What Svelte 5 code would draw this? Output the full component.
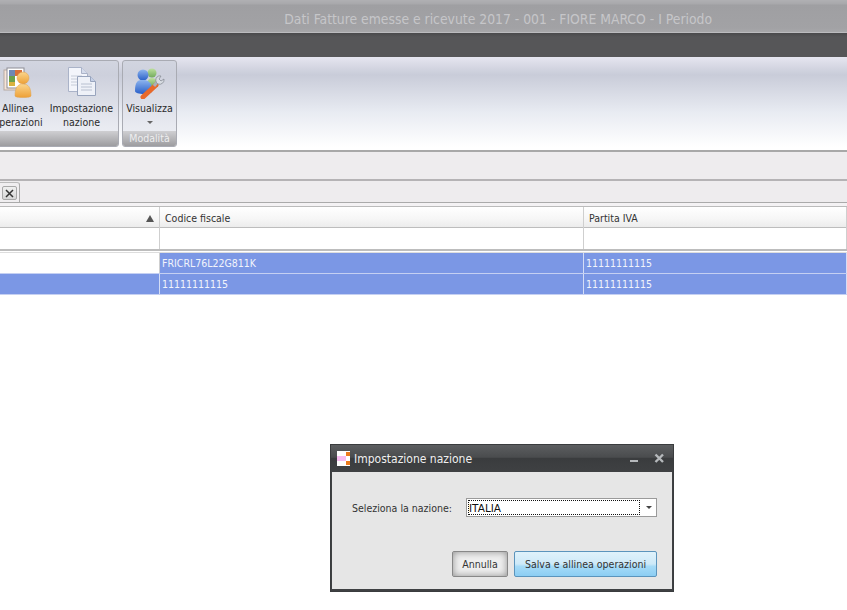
<script>
  const columns = ['', 'Codice fiscale', 'Partita IVA'];
  const rows = [
    { cells: ['', 'FRICRL76L22G811K', '11111111115'], firstSelected: false },
    { cells: ['', '11111111115', '11111111115'], firstSelected: true }
  ];
</script>

<div class="page">
  <header class="titlebar"><span>Dati Fatture emesse e ricevute 2017 - 001 - FIORE MARCO - I Periodo</span></header>
  <div class="tabsbar"></div>

  <section class="ribbon">
    <div class="group first">
      <div class="buttons">
        <div class="rbtn allinea">
          <svg width="30" height="32" viewBox="4 0 30 32">
            <defs>
              <linearGradient id="orange" x1="0" y1="0" x2="0" y2="1"><stop offset="0" stop-color="#fbd58c"/><stop offset="1" stop-color="#eda036"/></linearGradient>
            </defs>
            <rect x="5" y="3" width="17" height="20" fill="#f6e4d8" stroke="#b6a9a2"/>
            <rect x="8" y="1" width="17" height="20" fill="#fff" stroke="#8d8d95"/>
            <rect x="10" y="3" width="6" height="6" fill="#6f87b4"/>
            <rect x="16" y="3" width="7" height="6" fill="#d9703a"/>
            <rect x="10" y="9" width="6" height="6" fill="#6aa04e"/>
            <rect x="10" y="15" width="6" height="4" fill="#d9b23f"/>
            <circle cx="24" cy="11" r="6" fill="url(#orange)" stroke="#e0a04c" stroke-width=".5"/>
            <path d="M16 29 C16 20 19 17 24 17 C29 17 32 20 32 29 C32 31 16 31 16 29Z" fill="url(#orange)" stroke="#e0a04c" stroke-width=".5"/>
          </svg>
          <span>Allinea<br />operazioni</span>
        </div>
        <div class="rbtn impost">
          <svg width="32" height="32" viewBox="-1 0 32 32">
            <path d="M1.500 .500h13l6 6v18h-19z" fill="#f3f5fb" stroke="#aab3c8"/>
            <path d="M14.500 .500v6h6" fill="#d5dcec" stroke="#aab3c8"/>
            <path d="M4 9h11M4 12h13M4 15h13M4 18h13" stroke="#c6ccd8"/>
            <path d="M10.500 9.500h13l5 5v14h-18z" fill="#eef1f8" stroke="#98a4bd"/>
            <path d="M23.500 9.500v5h5" fill="#c5d0e6" stroke="#98a4bd"/>
            <path d="M14 17h11M14 20h11M14 23h11" stroke="#b8c0d0"/>
          </svg>
          <span>Impostazione<br />nazione</span>
        </div>
      </div>
      <div class="caption"></div>
    </div>

    <div class="group second">
      <div class="buttons">
        <div class="rbtn visual">
          <svg width="32" height="32" viewBox="0 0 32 32">
            <defs>
              <linearGradient id="blue" x1="0" y1="0" x2="0" y2="1"><stop offset="0" stop-color="#8db4ee"/><stop offset="1" stop-color="#2a60c8"/></linearGradient>
              <linearGradient id="green" x1="0" y1="0" x2="0" y2="1"><stop offset="0" stop-color="#bde09e"/><stop offset="1" stop-color="#72ab5c"/></linearGradient>
            </defs>
            <circle cx="18" cy="6" r="4.500" fill="url(#green)"/>
            <path d="M13 20c0-7 2-9 5-9s6 2 6 9z" fill="url(#green)"/>
            <circle cx="9" cy="8" r="5.500" fill="url(#blue)"/>
            <path d="M1 24c0-10 3-11 8-11s9 2 9 11c0 2-3 3-8 3s-9-1-9-3z" fill="url(#blue)"/>
            <path d="M9 30l13-12" stroke="#e8692a" stroke-width="5" stroke-linecap="round"/>
            <path d="M20 19l4-5" stroke="#aab0b8" stroke-width="3"/>
            <path d="M23 10a4.500 4.500 0 0 0 1 7a4.500 4.500 0 0 0 6-5l-3 2-2-2 2-3a4 4 0 0 0-4 1z" fill="#d8dce2" stroke="#7f858e" stroke-width=".7"/>
          </svg>
          <span>Visualizza</span>
          <i class="drop"></i>
        </div>
      </div>
      <div class="caption">Modalità</div>
    </div>
  </section>

  <div class="band"></div>

  <div class="tabrow">
    <div class="tab"><button class="close" aria-label="Chiudi">
      <svg width="9" height="9" viewBox="0 0 9 9"><path d="M1 1l7 7M8 1L1 8" stroke="#333" stroke-width="1.500"/></svg>
    </button></div>
  </div>

  <div class="grid">
    <div class="row head">
      {#each columns as c, i}
        <div class="cell">{c}{#if i === 0}<i class="sort"></i>{/if}</div>
      {/each}
    </div>
    <div class="row filter">
      <div class="cell"></div><div class="cell"></div><div class="cell"></div>
    </div>
    <div class="sep"></div>
    {#each rows as r}
      <div class="row data">
        {#each r.cells as c, i}
          <div class="cell" class:sel={i > 0 || r.firstSelected}>{c}</div>
        {/each}
      </div>
    {/each}
  </div>

  <div class="dialog">
    <div class="dlg-title">
      <svg class="logo" width="13" height="15" viewBox="0 0 13 15">
        <rect width="13" height="15" fill="#fff"/>
        <rect x="0" y="5" width="9" height="5" fill="#f7bdf0"/>
        <rect x="9" y="1" width="4" height="4" fill="#ec7a1c"/>
        <rect x="9" y="10" width="4" height="4" fill="#ec7a1c"/>
      </svg>
      <span class="dlg-name">Impostazione nazione</span>
      <svg class="winbtn" width="36" height="12" viewBox="0 0 36 12">
        <path d="M1 8h8" stroke="#b5b8bb" stroke-width="2"/>
        <path d="M26.500 1.500l7.500 7.500M34 1.500l-7.500 7.500" stroke="#b5b8bb" stroke-width="2.400"/>
      </svg>
    </div>
    <div class="dlg-body">
      <div class="field">
        <label for="naz">Seleziona la nazione:</label>
        <div class="combo" id="naz">
          <span class="value">ITALIA</span>
          <i class="combo-arrow"></i>
        </div>
      </div>
      <div class="actions">
        <button class="btn cancel">Annulla</button>
        <button class="btn ok">Salva e allinea operazioni</button>
      </div>
    </div>
  </div>
</div>

<style>
  :global(body) { margin: 0; background: #fff; }
  .page {
    position: relative; width: 847px; height: 610px; overflow: hidden; background: #fff;
    font-family: "DejaVu Sans Condensed", "DejaVu Sans", sans-serif; font-stretch: condensed; font-size: 10.500px; color: #222;
  }
  .titlebar {
    height: 33px; box-sizing: border-box; border-bottom: 1px solid #bcbcbf;
    background: linear-gradient(#b0b0b3 0, #a8a8ab 4px, #9f9fa2 5px, #a2a2a5 28px, #a8a8aa 32px);
    display: flex; justify-content: flex-end; padding-right: 135px; padding-top: 11px;
  }
  .titlebar span { font-size: 13.800px; line-height: 16px; color: #c6c6c9; white-space: nowrap; }
  .tabsbar { height: 24px; background: linear-gradient(#4a4a4c, #565658 4px, #565658); }

  .ribbon {
    height: 95px; box-sizing: border-box; padding: 3px 0 3px 0; display: flex; gap: 3px;
    background: linear-gradient(#e6e6f0 0, #d2d4e0 12px, #c9ccd9 18px, #e8ebf2 55px, #fff 90px);
    border-bottom: 2px solid #a8a8a8;
  }
  .group {
    display: flex; flex-direction: column; box-sizing: border-box; height: 87px;
    border: 1px solid #a9abb3; border-radius: 3px; overflow: hidden;
    background: linear-gradient(#d2d5e0 0, #cdd0dc 14px, #e6e8ef 60px, #f0f2f6);
  }
  .first { width: 133px; margin-left: -14px; }
  .second { width: 55px; }
  .buttons { height: 70px; display: flex; }
  .caption {
    flex: 1; text-align: center; line-height: 15px; color: #eeeeef;
    background: linear-gradient(#cfcfd2, #9d9da0);
  }
  .rbtn { display: flex; flex-direction: column; align-items: center; text-align: center; line-height: 14px; color: #2a2a2a; }
  .rbtn svg { height: 32px; margin-top: 6px; margin-bottom: 2px; flex: none; }
  .allinea { width: 62px; white-space: nowrap; }
  .impost { width: 65px; white-space: nowrap; }
  .visual { width: 100%; white-space: nowrap; }
  .drop { margin-top: 6px; width: 0; height: 0; border: 3px solid transparent; border-top: 3px solid #666; border-bottom: 0; }

  .band { height: 27px; background: #eeecee; border-bottom: 2px solid #b5b3b5; }
  .tabrow { height: 21px; background: #eeecee; border-bottom: 1px solid #aaa; display: flex; align-items: flex-end; }
  .tab {
    width: 20px; height: 20px; box-sizing: border-box; padding: 3px 0 0 2px;
    border-right: 1px solid #aaa; border-top: 1px solid #bbb; border-top-right-radius: 3px; background: #f0eef0;
  }
  .close {
    width: 15px; height: 14px; box-sizing: border-box; padding: 0; display: flex; align-items: center; justify-content: center;
    border: 1px solid #a8a8a8; border-radius: 2px; background: linear-gradient(#f0f0f0, #d6d6d6);
  }

  .grid { padding-top: 3px; background: #f4f2f4; }
  .row { display: grid; grid-template-columns: 160px 424px 1fr; }
  .cell { box-sizing: border-box; border-right: 1px solid #cfcfcf; white-space: nowrap; position: relative; }
  .head { border-top: 1px solid #bbb; border-bottom: 1px solid #bdbdbd; background: linear-gradient(#fff, #f6f6f6 60%, #ececec); box-sizing: border-box; height: 22px; }
  .head .cell { line-height: 22px; padding-left: 5px; color: #333; }
  .filter { height: 21px; background: #fff; border-bottom: 2px solid #bdbdbd; }
  .sep { height: 1px; background: #fff; }
  .sort { position: absolute; right: 5px; top: 8px; width: 0; height: 0; border: 4px solid transparent; border-bottom: 7px solid #555; border-top: 0; }
  .data { height: 20px; border-top: 1px solid #ddd; background: #fff; }
  .data .cell { line-height: 20px; padding-left: 2px; background: #fff; }
  .data .cell.sel { background: #7b97e5; color: #f2f4fb; border-right-color: #d4ddf6; }
  .data + .data { border-top: 1px solid #c5d0f2; border-bottom: 1px solid #c5d0f2; }

  .dialog {
    position: absolute; left: 330px; top: 444px; width: 344px; height: 148px; box-sizing: border-box;
    border: 1px solid #3a3c3e; display: flex; flex-direction: column; background: #e6e6e6;
  }
  .dlg-title {
    height: 27px; flex: none; box-sizing: border-box; display: flex; align-items: center; padding: 0 8px 0 6px;
    background: linear-gradient(#5c5e60, #4a4c4e 45%, #3a3c3e 50%, #3f4143);
    color: #f0f0f0;
  }
  .dlg-name { font-size: 12px; margin-left: 4px; flex: 1; }
  .logo { flex: none; }
  .winbtn { flex: none; }
  .dlg-body {
    flex: 1; border: 1px solid #3f4143; border-top: 0; border-bottom-width: 2px; box-sizing: border-box;
    padding: 0 15px 0 20px; display: flex; flex-direction: column; background: #e6e6e6;
  }
  .field { display: flex; align-items: center; margin-top: 26px; height: 19px; }
  .field label { width: 114px; color: #333; flex: none; }
  .combo { flex: 1; height: 19px; box-sizing: border-box; border: 1px solid #9a9a9a; background: #fff; display: flex; align-items: center; padding: 1px; }
  .value { flex: 1; height: 15px; line-height: 15px; box-sizing: border-box; border: 1px dotted #111; color: #111; margin-right: 3px; font-stretch: normal; font-family: "DejaVu Sans", sans-serif; }
  .combo-arrow { width: 0; height: 0; margin: 0 3px 0 3px; border: 3px solid transparent; border-top: 3px solid #444; border-bottom: 0; }
  .actions { display: flex; justify-content: flex-end; gap: 6px; margin-top: 34px; }
  .btn { height: 26px; box-sizing: border-box; font: inherit; color: #333; padding: 0; border-radius: 2px; }
  .cancel { width: 56px; border: 1px solid #888; background: #eeeeee; box-shadow: inset 0 0 7px #8e8e8e; }
  .ok { width: 143px; border: 1px solid #5b94bc; background: linear-gradient(#dff2fb, #cde9f8 50%, #a6dbf7 60%, #8ccdf3); }
</style>
